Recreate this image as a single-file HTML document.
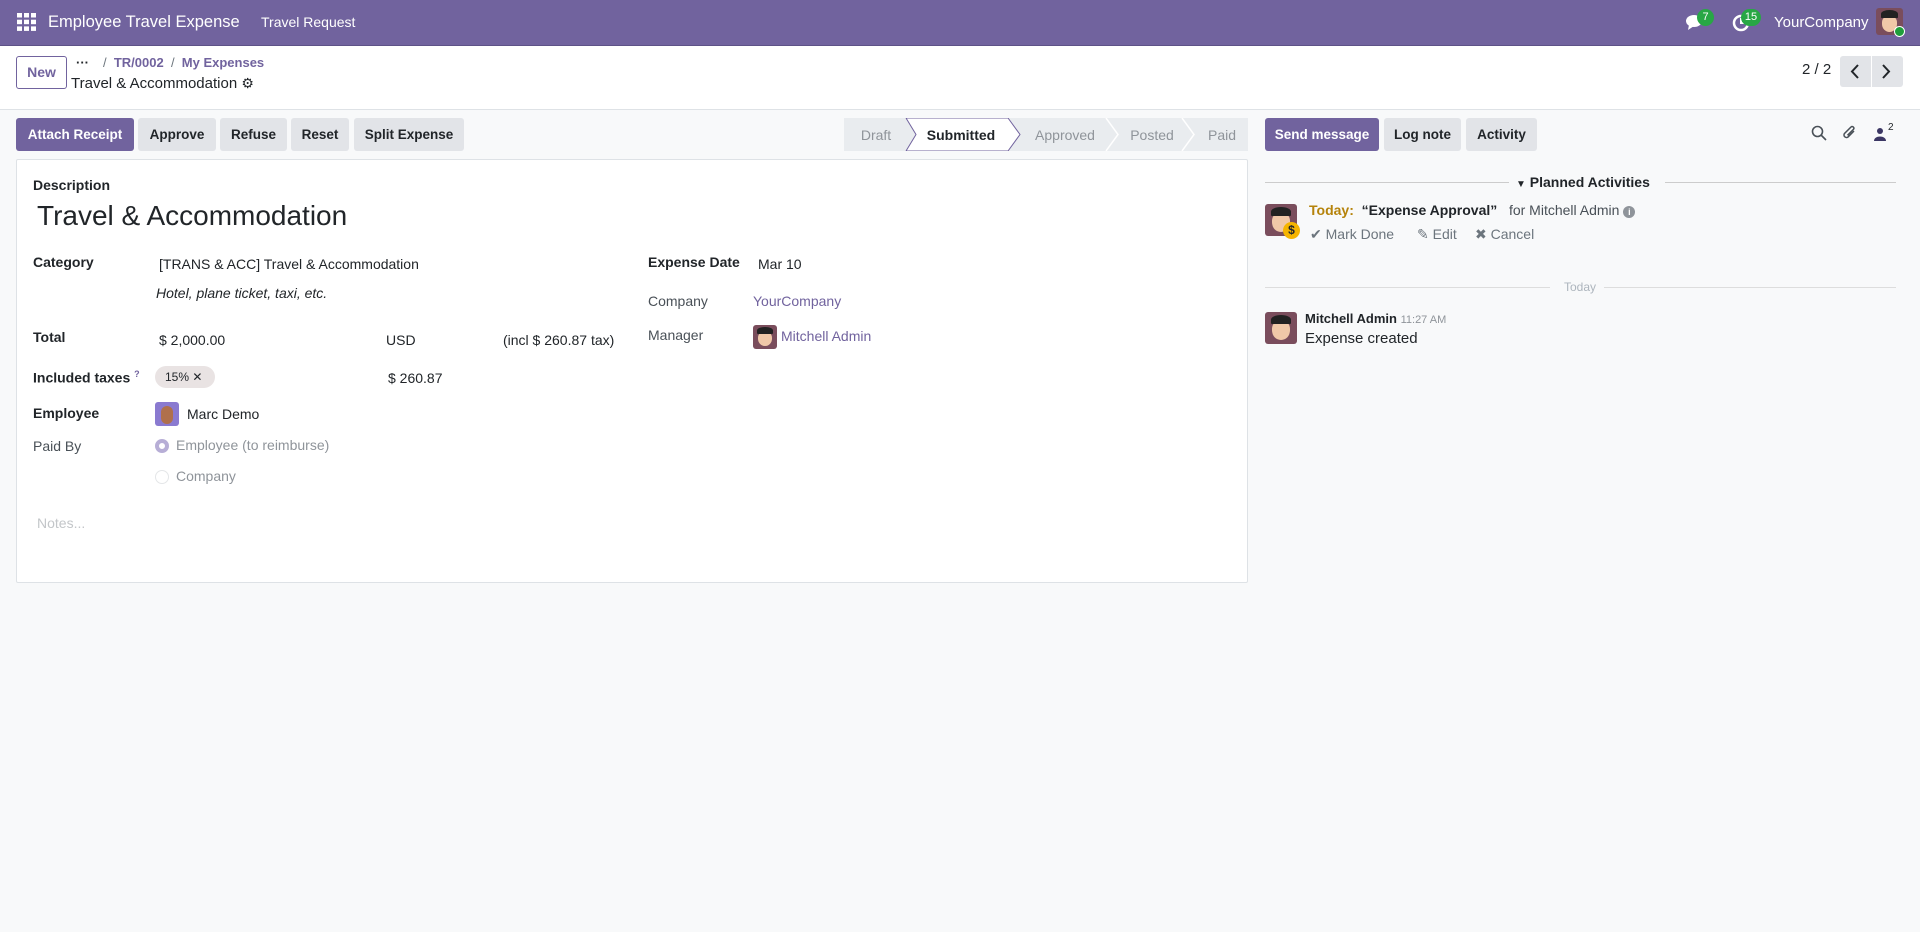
<!DOCTYPE html>
<html><head><meta charset="utf-8"><style>
*{box-sizing:border-box;margin:0;padding:0}
body{width:1920px;height:932px;background:#f8f9fa;font-family:"Liberation Sans",sans-serif;font-size:14px;color:#212529;position:relative;overflow:hidden}
.a{position:absolute;white-space:nowrap}
.nav{left:0;top:0;width:1920px;height:46px;background:#71639e;border-bottom:1px solid #5e5287}
.cp{left:0;top:46px;width:1920px;height:64px;background:#fff;border-bottom:1px solid #dee2e6}
.btn{position:absolute;top:118px;height:33px;border-radius:3px;background:#e2e4e8;font-weight:bold;font-size:13.5px;display:flex;align-items:center;justify-content:center;color:#212529}
.pri{background:#71639e;color:#fff}
.sheet{left:16px;top:159px;width:1232px;height:424px;background:#fff;border:1px solid #dee2e6;border-radius:2px}
.lbl{font-weight:bold}
.mut{color:#495057}
.link{color:#71639e}
.st{position:absolute;top:118px;height:33px;display:flex;align-items:center;justify-content:center;font-size:14px;color:#8f949a;background:#e9ecef}
.av{position:absolute;border-radius:3px;background:#7a4d5c;overflow:hidden}
.av:after{content:"";position:absolute;left:22%;top:28%;width:56%;height:60%;background:#f0c8a8;border-radius:40% 40% 50% 50%}
.av:before{content:"";position:absolute;left:18%;top:8%;width:64%;height:30%;background:#222;border-radius:50% 50% 10% 10%;z-index:1}
</style></head><body>
<div class="a nav"></div>
<svg class="a" style="left:17px;top:13px" width="19" height="18" viewBox="0 0 19 18" fill="#fff"><rect x="0" y="0" width="5" height="4.5"/><rect x="7" y="0" width="5" height="4.5"/><rect x="14" y="0" width="5" height="4.5"/><rect x="0" y="6.7" width="5" height="4.5"/><rect x="7" y="6.7" width="5" height="4.5"/><rect x="14" y="6.7" width="5" height="4.5"/><rect x="0" y="13.4" width="5" height="4.5"/><rect x="7" y="13.4" width="5" height="4.5"/><rect x="14" y="13.4" width="5" height="4.5"/></svg>
<div class="a" style="left:48px;top:13px;font-size:16.5px;color:#fff">Employee Travel Expense</div>
<div class="a" style="left:261px;top:14px;font-size:14px;color:#fff">Travel Request</div>
<svg class="a" style="left:1686px;top:14px" width="18" height="16" viewBox="0 0 18 16"><ellipse cx="8" cy="7" rx="8" ry="6" fill="#fff"/><path d="M3 11 L2 16 L8 12Z" fill="#fff"/></svg>
<div class="a" style="left:1697px;top:9px;width:17px;height:17px;border-radius:9px;background:#28a745;color:#fff;font-size:11px;text-align:center;line-height:17px">7</div>
<svg class="a" style="left:1732px;top:14px" width="18" height="18" viewBox="0 0 18 18"><circle cx="9" cy="9" r="7" fill="none" stroke="#fff" stroke-width="2.5"/><path d="M9 4v5h3" stroke="#fff" stroke-width="2" fill="none"/></svg>
<div class="a" style="left:1741px;top:9px;width:20px;height:17px;border-radius:9px;background:#28a745;color:#fff;font-size:11px;text-align:center;line-height:17px">15</div>
<div class="a" style="left:1774px;top:14px;font-size:15px;color:#fff">YourCompany</div>
<div class="av" style="left:1876px;top:8px;width:27px;height:27px"></div>
<div class="a" style="left:1894px;top:26px;width:11px;height:11px;border-radius:6px;background:#1e9e3a;border:1.5px solid #fff;z-index:2"></div>

<div class="a cp"></div>
<div class="a" style="left:16px;top:56px;width:51px;height:33px;border:1px solid #71639e;border-radius:3px;background:#fff;color:#71639e;font-weight:bold;font-size:14px;text-align:center;line-height:31px">New</div>
<div class="a" style="left:76px;top:55px;font-size:13px;font-weight:bold">···</div>
<div class="a" style="left:103px;top:55px;font-size:13px;color:#71639e;font-weight:bold"><span style="color:#6c757d;font-weight:normal">/</span>&nbsp; TR/0002 &nbsp;<span style="color:#6c757d;font-weight:normal">/</span>&nbsp; My Expenses</div>
<div class="a" style="left:71px;top:75px;font-size:15px">Travel &amp; Accommodation <span style="font-size:14px">⚙</span></div>
<div class="a" style="left:1802px;top:61px;font-size:15px">2 / 2</div>
<div class="a" style="left:1840px;top:56px;width:63px;height:31px;background:#e2e4e8;border-radius:3px"></div>
<div class="a" style="left:1871px;top:56px;width:1px;height:31px;background:#fff"></div>
<svg class="a" style="left:1849px;top:63px" width="12" height="17" viewBox="0 0 12 17"><path d="M9 2L3 8.5 9 15" stroke="#212529" stroke-width="2" fill="none"/></svg>
<svg class="a" style="left:1880px;top:63px" width="12" height="17" viewBox="0 0 12 17"><path d="M3 2l6 6.5L3 15" stroke="#212529" stroke-width="2" fill="none"/></svg>

<div class="btn pri" style="left:16px;width:118px">Attach Receipt</div>
<div class="btn" style="left:138px;width:78px">Approve</div>
<div class="btn" style="left:220px;width:67px">Refuse</div>
<div class="btn" style="left:291px;width:58px">Reset</div>
<div class="btn" style="left:354px;width:110px">Split Expense</div>

<div class="st" style="left:844px;width:64px">Draft</div>
<div class="st" style="left:906px;width:102px;background:#fff;color:#212529;font-weight:bold;padding-left:8px">Submitted</div>
<div class="st" style="left:1008px;width:100px;padding-left:14px">Approved</div>
<div class="st" style="left:1106px;width:78px;padding-left:14px">Posted</div>
<div class="st" style="left:1182px;width:66px;padding-left:14px">Paid</div>
<svg class="a" style="left:900px;top:118px" width="360" height="33" viewBox="0 0 360 33"><path d="M6 0L16 16.5 6 33" fill="#e9ecef" stroke="#71639e"/><path d="M108 0L120 16.5 108 33" fill="#fff" stroke="#71639e"/><path d="M206 0L218 16.5 206 33" fill="none" stroke="#fff" stroke-width="1.5"/><path d="M282 0L294 16.5 282 33" fill="none" stroke="#fff" stroke-width="1.5"/><path d="M6 0H108M6 33H108" stroke="#71639e"/></svg>

<div class="a sheet"></div>
<div class="a lbl" style="left:33px;top:177px;font-size:14px">Description</div>
<div class="a" style="left:37px;top:200px;font-size:28px">Travel &amp; Accommodation</div>
<div class="a lbl" style="left:33px;top:254px">Category</div>
<div class="a" style="left:159px;top:256px">[TRANS &amp; ACC] Travel &amp; Accommodation</div>
<div class="a" style="left:156px;top:285px;font-style:italic">Hotel, plane ticket, taxi, etc.</div>
<div class="a lbl" style="left:33px;top:329px">Total</div>
<div class="a" style="left:159px;top:332px">$ 2,000.00</div>
<div class="a" style="left:386px;top:332px">USD</div>
<div class="a" style="left:503px;top:332px">(incl $ 260.87 tax)</div>
<div class="a lbl" style="left:33px;top:369px">Included taxes <sup style="color:#71639e;font-size:9px">?</sup></div>
<div class="a" style="left:155px;top:366px;width:60px;height:22px;border-radius:11px;background:#e9e3e3;font-size:12px;line-height:22px;padding-left:10px">15% ✕</div>
<div class="a" style="left:388px;top:370px">$ 260.87</div>
<div class="a lbl" style="left:33px;top:405px">Employee</div>
<div class="a" style="left:155px;top:402px;width:24px;height:24px;border-radius:3px;background:#8a7ad0;overflow:hidden"><div style="position:absolute;left:6px;top:4px;width:12px;height:18px;border-radius:6px;background:#b0704c"></div></div>
<div class="a" style="left:187px;top:406px">Marc Demo</div>
<div class="a mut" style="left:33px;top:438px">Paid By</div>
<div class="a" style="left:155px;top:439px;width:14px;height:14px;border-radius:7px;border:4px solid #b7aed6;background:#fff"></div>
<div class="a" style="left:176px;top:437px;color:#8f949a">Employee (to reimburse)</div>
<div class="a" style="left:155px;top:470px;width:14px;height:14px;border-radius:7px;border:1px solid #e4e6e8;background:#fff"></div>
<div class="a" style="left:176px;top:468px;color:#8f949a">Company</div>
<div class="a" style="left:37px;top:515px;color:#c3c6c9">Notes...</div>

<div class="a lbl" style="left:648px;top:254px">Expense Date</div>
<div class="a" style="left:758px;top:256px">Mar 10</div>
<div class="a mut" style="left:648px;top:293px">Company</div>
<div class="a link" style="left:753px;top:293px">YourCompany</div>
<div class="a mut" style="left:648px;top:327px">Manager</div>
<div class="av" style="left:753px;top:325px;width:24px;height:24px"></div>
<div class="a link" style="left:781px;top:328px">Mitchell Admin</div>

<div class="btn pri" style="left:1265px;width:114px">Send message</div>
<div class="btn" style="left:1384px;width:77px">Log note</div>
<div class="btn" style="left:1466px;width:71px">Activity</div>
<svg class="a" style="left:1811px;top:125px" width="16" height="16" viewBox="0 0 16 16"><circle cx="6.5" cy="6.5" r="5" fill="none" stroke="#495057" stroke-width="1.6"/><path d="M10 10l5 5" stroke="#495057" stroke-width="1.6"/></svg>
<svg class="a" style="left:1842px;top:124px" width="16" height="18" viewBox="0 0 16 18"><path d="M12 7L6 13a2.5 2.5 0 01-3.5-3.5L9 3a1.7 1.7 0 012.4 2.4L5.5 11.3" fill="none" stroke="#495057" stroke-width="1.5"/></svg>
<svg class="a" style="left:1874px;top:127px" width="12" height="14" viewBox="0 0 12 14"><circle cx="6" cy="4" r="3" fill="#3b3663"/><path d="M0 14c0-6 12-6 12 0z" fill="#3b3663"/></svg>
<div class="a" style="left:1888px;top:122px;font-size:10px">2</div>

<div class="a" style="left:1265px;top:182px;width:244px;height:1px;background:#ccc"></div>
<div class="a" style="left:1665px;top:182px;width:231px;height:1px;background:#ccc"></div>
<div class="a lbl" style="left:1516px;top:174px;font-size:14px"><span style="font-size:10px">▼</span> Planned Activities</div>
<div class="av" style="left:1265px;top:204px;width:32px;height:32px"></div>
<div class="a" style="left:1283px;top:222px;width:17px;height:17px;border-radius:9px;background:#f5b400;font-size:12px;font-weight:bold;text-align:center;line-height:17px;z-index:2">$</div>
<div class="a" style="left:1309px;top:202px"><b style="color:#b5830b">Today:</b> &nbsp;<b>“Expense Approval”</b> &nbsp; <span class="mut">for Mitchell Admin</span> <span style="display:inline-block;width:12px;height:12px;border-radius:6px;background:#8f949a;color:#fff;font-size:9px;text-align:center;line-height:12px;font-weight:bold">i</span></div>
<div class="a" style="left:1310px;top:226px;color:#6c757d">✔ Mark Done</div>
<div class="a" style="left:1417px;top:226px;color:#6c757d">✎ Edit</div>
<div class="a" style="left:1475px;top:226px;color:#6c757d">✖ Cancel</div>

<div class="a" style="left:1265px;top:287px;width:285px;height:1px;background:#ddd"></div>
<div class="a" style="left:1604px;top:287px;width:292px;height:1px;background:#ddd"></div>
<div class="a" style="left:1564px;top:280px;font-size:12px;color:#adb5bd">Today</div>
<div class="av" style="left:1265px;top:312px;width:32px;height:32px"></div>
<div class="a" style="left:1305px;top:311px;font-size:13px"><b>Mitchell Admin</b> <span style="font-size:11px;color:#8f949a">11:27 AM</span></div>
<div class="a" style="left:1305px;top:330px;font-size:15px">Expense created</div>
</body></html>
